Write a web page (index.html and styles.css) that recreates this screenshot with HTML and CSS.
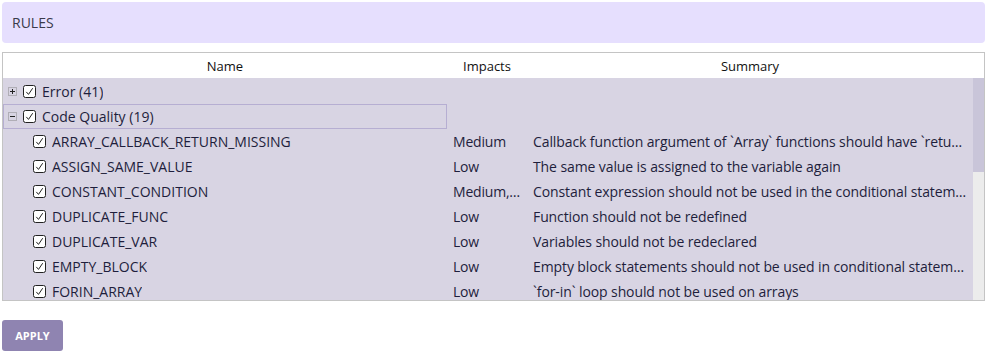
FILE: index.html
```html
<!DOCTYPE html>
<html lang="en">
<head>
    <meta charset="UTF-8">
    <title>Rules</title>
    <link rel="stylesheet" href="styles.css">
</head>
<body>
    <div class="rules-bar">RULES</div>

    <div class="rules-table">
        <div class="table-head">
            <div class="col-name">Name</div>
            <div class="col-impacts">Impacts</div>
            <div class="col-summary">Summary</div>
            <div class="head-gap"></div>
        </div>
        <div class="table-wrap">
            <div class="table-body">
                <div class="row group">
                    <div class="col-name">
                        <svg class="toggle" width="9" height="9" viewBox="0 0 9 9"><rect x="0.5" y="0.5" width="8" height="8" fill="none" stroke="#888" stroke-dasharray="1 1"/><path d="M2 4.5h5M4.5 2v5" stroke="#222"/></svg>
                        <svg class="check" width="13" height="13" viewBox="0 0 13 13"><rect x="0.5" y="0.5" width="12" height="12" rx="2" fill="#fff" stroke="#222"/><path d="M3.3 6.9l2.2 2.5 4.2-6.2" fill="none" stroke="#222"/></svg>
                        <span>Error (41)</span>
                    </div>
                </div>
                <div class="row group focused">
                    <div class="col-name">
                        <svg class="toggle" width="9" height="9" viewBox="0 0 9 9"><rect x="0.5" y="0.5" width="8" height="8" fill="none" stroke="#888" stroke-dasharray="1 1"/><path d="M2 4.5h5" stroke="#222"/></svg>
                        <svg class="check" width="13" height="13" viewBox="0 0 13 13"><rect x="0.5" y="0.5" width="12" height="12" rx="2" fill="#fff" stroke="#222"/><path d="M3.3 6.9l2.2 2.5 4.2-6.2" fill="none" stroke="#222"/></svg>
                        <span>Code Quality (19)</span>
                    </div>
                </div>
            </div>
            <div class="scrollbar"><div class="scroll-thumb"></div></div>
        </div>
    </div>

    <button class="apply-button">APPLY</button>

    <script>
        // Code Quality rules
        const rules = [
            ['ARRAY_CALLBACK_RETURN_MISSING', 'Medium', 'Callback function argument of `Array` functions should have `return` statement'],
            ['ASSIGN_SAME_VALUE', 'Low', 'The same value is assigned to the variable again'],
            ['CONSTANT_CONDITION', 'Medium, Low', 'Constant expression should not be used in the conditional statements'],
            ['DUPLICATE_FUNC', 'Low', 'Function should not be redefined'],
            ['DUPLICATE_VAR', 'Low', 'Variables should not be redeclared'],
            ['EMPTY_BLOCK', 'Low', 'Empty block statements should not be used in conditional statements'],
            ['FORIN_ARRAY', 'Low', '`for-in` loop should not be used on arrays'],
            ['GETTER_RETURN_MISSING', 'Medium', 'Getter should have `return` statement'],
            ['MISSING_RETURN_VALUE', 'Low', 'Function should return a value consistently'],
            ['NO_EFFECT_CALL', 'Low', 'Result of function call without side effect should be used'],
            ['REDUNDANT_ELSE', 'Low', 'Unnecessary `else` block should be removed'],
            ['SAME_OPERAND_VALUE', 'Medium', 'Both operands of the binary operator have the same value'],
            ['UNREACHABLE_CODE', 'Low', 'Code should be reachable'],
            ['UNUSED_DECL', 'Low', 'Unused local variables and functions should be removed'],
            ['UNUSED_EXPR', 'Low', 'Result of an expression should be used'],
            ['UNUSED_IMPORT', 'Low', 'Unused imported bindings should be removed'],
            ['UNUSED_PARAM', 'Low', 'Unused function parameters should be removed'],
            ['UNUSED_VAR_ASSIGN', 'Low', 'Value assigned to a variable should be used'],
            ['USELESS_ARROW_FUNC_BIND', 'Low', 'Arrow function should not be bound with `bind()`']
        ];

        const checkSvg = '<svg class="check" width="13" height="13" viewBox="0 0 13 13"><rect x="0.5" y="0.5" width="12" height="12" rx="2" fill="#fff" stroke="#222"/><path d="M3.3 6.9l2.2 2.5 4.2-6.2" fill="none" stroke="#222"/></svg>';
        const body = document.querySelector('.table-body');

        rules.forEach(([name, impact, summary]) => {
            const row = document.createElement('div');
            row.className = 'row child';
            row.innerHTML = `
                <div class="col-name">${checkSvg}<span>${name}</span></div>
                <div class="col-impacts">${impact}</div>
                <div class="col-summary">${summary}</div>`;
            body.appendChild(row);
        });
    </script>
</body>
</html>
```

FILE: styles.css
```css
body {
    margin: 0;
    padding: 2px;
    font-family: "Open Sans", "Noto Sans", sans-serif;
    font-size: 14px;
    color: #1e1e3c;
}
.rules-bar {
    background: #e6dffe;
    border-radius: 4px;
    height: 41px;
    padding: 0 10px;
    display: flex;
    align-items: center;
    font-size: 14px;
    color: #3a3a4a;
}
.rules-table {
    margin-top: 9px;
    border: 1px solid #c4c4c4;
}
.table-head {
    display: flex;
    height: 25px;
    align-items: center;
    background: #fff;
    color: #111;
    font-size: 13px;
}
.table-head > div {
    text-align: center;
}
.head-gap {
    width: 11px;
}
.col-name {
    width: 444px;
    flex-shrink: 0;
    display: flex;
    align-items: center;
    box-sizing: border-box;
}
.col-impacts {
    width: 80px;
    flex-shrink: 0;
    box-sizing: border-box;
}
.col-summary {
    flex: 1;
    min-width: 0;
}
.table-head .col-name {
    justify-content: center;
}
.table-wrap {
    display: flex;
    height: 222px;
    background: #d8d4e3;
}
.table-body {
    flex: 1;
    min-width: 0;
    overflow: hidden;
    padding-top: 1px;
}
.scrollbar {
    width: 11px;
    background: #ececec;
}
.scroll-thumb {
    height: 94px;
    background: #c9c5d9;
}
.row {
    display: flex;
    height: 25px;
    align-items: center;
    white-space: nowrap;
}
.row > div {
    overflow: hidden;
    text-overflow: ellipsis;
}
.group .col-name {
    padding-left: 5px;
    height: 25px;
}
.focused .col-name {
    outline: 1px solid #b6aed2;
    outline-offset: -1px;
}
.toggle {
    margin-right: 6px;
    flex-shrink: 0;
}
.check {
    margin-right: 6px;
    flex-shrink: 0;
}
.child .col-name {
    padding-left: 30px;
}
.col-name span {
    overflow: hidden;
    text-overflow: ellipsis;
}
.row .col-impacts {
    padding: 0 4px 0 6px;
    letter-spacing: -0.2px;
}
.row .col-summary {
    padding: 0 6px;
    letter-spacing: -0.1px;
}
.apply-button {
    margin-top: 19px;
    background: #8f84b1;
    color: #fff;
    border: none;
    border-radius: 3px;
    width: 61px;
    height: 31px;
    font-family: "Open Sans", sans-serif;
    font-size: 11px;
    font-weight: bold;
    cursor: pointer;
}
```
